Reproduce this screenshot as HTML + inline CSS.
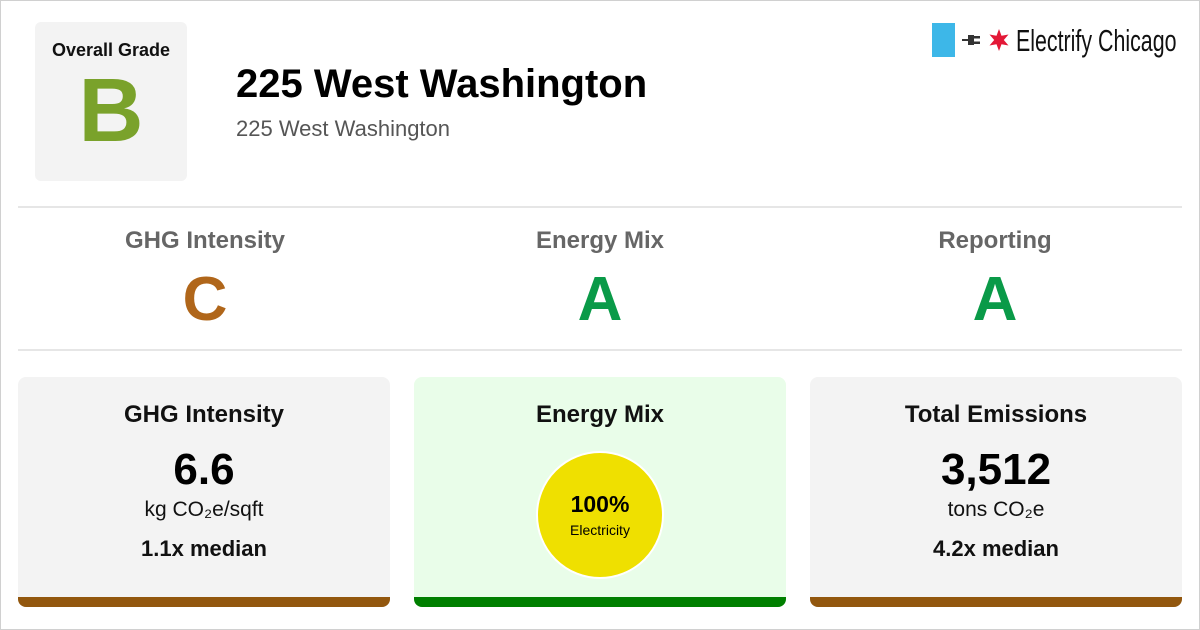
<!DOCTYPE html>
<html><head><meta charset="utf-8"><style>
*{margin:0;padding:0;box-sizing:border-box}
body{width:1200px;height:630px;background:#fff;font-family:"Liberation Sans",sans-serif;position:relative;overflow:hidden}
.frame{position:absolute;left:0;top:0;width:1200px;height:630px;border:1px solid #d0d0d0}
.grade{position:absolute;left:35px;top:22px;width:152px;height:159px;background:#f3f3f3;border-radius:6px;text-align:center}
.grade .l{font-size:18px;font-weight:bold;margin-top:18px;color:#111}
.grade .g{font-size:90px;font-weight:bold;color:#7aa22b;line-height:90px;margin-top:5px}
.t{position:absolute;left:236px;top:62px;font-size:40px;font-weight:bold;color:#000}
.s{position:absolute;left:236px;top:116px;font-size:22px;color:#555}
.hr{position:absolute;left:18px;width:1164px;height:2px;background:#e6e6e6}
.col{position:absolute;width:300px;text-align:center}
.col .l{font-size:24px;font-weight:bold;color:#666;margin-top:0}
.col .g{font-size:62px;font-weight:bold;line-height:62px;margin-top:14px}
.card{position:absolute;top:377px;width:372px;height:230px;background:#f3f3f3;border-radius:8px;overflow:hidden;text-align:center}
.card .bar{position:absolute;left:0;bottom:0;width:100%;height:10px}
.card .h{font-size:24px;font-weight:bold;margin-top:24px;color:#111}
.card .n{font-size:44px;font-weight:bold;margin-top:16px;line-height:50px;color:#000}
.card .u{font-size:21px;margin-top:3px;color:#111}
.card .m{font-size:22px;font-weight:bold;margin-top:14px;color:#111}
.circ{position:absolute;left:122px;top:74px;width:128px;height:128px;border-radius:50%;background:#efe000;border:2px solid #fff}
</style></head><body>
<div class="frame"></div>
<div class="grade"><div class="l">Overall Grade</div><div class="g">B</div></div>
<div class="t">225 West Washington</div>
<div class="s">225 West Washington</div>
<div style="position:absolute;left:932px;top:23px;width:23px;height:34px;background:#3db7e8"></div>
<svg style="position:absolute;left:962px;top:32px" width="24" height="16" viewBox="0 0 24 16"><rect x="0" y="7" width="6" height="2" fill="#333"/><path d="M6 3h6v10H6z" fill="#333"/><rect x="12" y="4" width="6" height="2.5" fill="#333"/><rect x="12" y="9.5" width="6" height="2.5" fill="#333"/></svg>
<svg style="position:absolute;left:987px;top:28px" width="24" height="24" viewBox="-12 -12 24 24"><path d="M0-11 2.5-4.3 9.5-5.5 4.8 0 9.5 5.5 2.5 4.3 0 11-2.5 4.3-9.5 5.5-4.8 0-9.5-5.5-2.5-4.3Z" fill="#e31837"/></svg>
<div style="position:absolute;left:1016px;top:23px;font-size:31px;color:#111;white-space:nowrap;transform:scaleX(0.69);transform-origin:left">Electrify Chicago</div>
<div class="hr" style="top:206px"></div>
<div class="hr" style="top:349px"></div>
<div class="col" style="left:55px;top:227px"><div class="l">GHG Intensity</div><div class="g" style="color:#b0661a">C</div></div>
<div class="col" style="left:450px;top:227px"><div class="l">Energy Mix</div><div class="g" style="color:#0a9a48">A</div></div>
<div class="col" style="left:845px;top:227px"><div class="l">Reporting</div><div class="g" style="color:#0a9a48">A</div></div>
<div class="card" style="left:18px"><div class="h">GHG Intensity</div><div class="n">6.6</div><div class="u">kg CO₂e/sqft</div><div class="m">1.1x median</div><div class="bar" style="background:#92570e"></div></div>
<div class="card" style="left:414px;background:#e9fde9"><div class="h">Energy Mix</div><div class="circ"><div style="font-size:23px;font-weight:bold;margin-top:38px">100%</div><div style="font-size:14px;margin-top:4px">Electricity</div></div><div class="bar" style="background:#007f00"></div></div>
<div class="card" style="left:810px"><div class="h">Total Emissions</div><div class="n">3,512</div><div class="u">tons CO₂e</div><div class="m">4.2x median</div><div class="bar" style="background:#92570e"></div></div>
</body></html>
